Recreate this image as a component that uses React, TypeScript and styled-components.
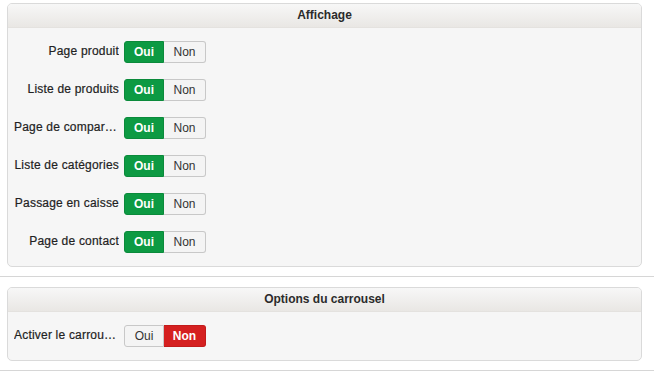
import React from 'react';
import styled, {createGlobalStyle} from "styled-components";

const GlobalStyle = createGlobalStyle`
    body {
        margin: 0;
        background: #ffffff;
        font-family: "Liberation Sans", Arial, sans-serif;
    }
`

type Row = { label: string, on: boolean }

const display: Row[] = [
    {label: 'Page produit', on: true},
    {label: 'Liste de produits', on: true},
    {label: 'Page de comparaison', on: true},
    {label: 'Liste de catégories', on: true},
    {label: 'Passage en caisse', on: true},
    {label: 'Page de contact', on: true},
]

const carousel: Row[] = [
    {label: 'Activer le carrousel', on: false},
]

const Section = ({title, rows}: { title: string, rows: Row[] }) => {
    return (
        <SectionWrap>
            <Panel>
                <PanelHeader>{title}</PanelHeader>
                <PanelBody>
                    {rows.map(r => (
                        <FieldRow key={r.label}>
                            <Label title={r.label}>{r.label}</Label>
                            <Toggle>
                                <ToggleBtn active={r.on} tone="yes">Oui</ToggleBtn>
                                <ToggleBtn active={!r.on} tone="no">Non</ToggleBtn>
                            </Toggle>
                        </FieldRow>
                    ))}
                </PanelBody>
            </Panel>
            <Divider/>
        </SectionWrap>
    )
}

export default function App() {
    return (
        <Page>
            <GlobalStyle/>
            <Section title="Affichage" rows={display}/>
            <Section title="Options du carrousel" rows={carousel}/>
        </Page>
    );
}

const Page = styled.div`
    padding-top: 3px;
    width: 654px;
`

const SectionWrap = styled.div`
    display: flex;
    flex-direction: column;
`

const Panel = styled.div`
    margin: 0 12px 0 7px;
    background: #f6f6f6;
    border: 1px solid #dadada;
    border-radius: 5px;
    overflow: hidden;
`

const PanelHeader = styled.div`
    height: 23px;
    line-height: 23px;
    text-align: center;
    font-size: 12px;
    font-weight: bold;
    color: #2b2b2b;
    background: linear-gradient(#f7f7f7, #e9e7e4);
    border-bottom: 1px solid #e4e2df;
`

const PanelBody = styled.div`
    display: flex;
    flex-direction: column;
    gap: 16px;
    padding: 13px 0 13px 6px;
`

const FieldRow = styled.div`
    display: flex;
    align-items: center;
    gap: 5px;
`

const Label = styled.div`
    width: 105px;
    text-align: right;
    font-size: 12px;
    letter-spacing: 0.2px;
    color: #222;
    -webkit-text-stroke: 0.2px #222;
    white-space: nowrap;
    overflow: hidden;
    text-overflow: ellipsis;
    margin-top: -2px;
`

const Toggle = styled.div`
    display: flex;
`

const ToggleBtn = styled.div<{ active: boolean, tone: 'yes' | 'no' }>`
    width: ${p => p.tone === 'yes' ? 40 : 42}px;
    height: 22px;
    box-sizing: border-box;
    display: flex;
    align-items: center;
    justify-content: center;
    font-size: 12px;
    font-weight: ${p => p.active ? 'bold' : 'normal'};
    color: ${p => p.active ? '#fff' : '#333'};
    background: ${p => p.active ? (p.tone === 'yes' ? '#0d9a43' : '#d52020') : '#f4f4f4'};
    border: 1px solid ${p => p.active ? (p.tone === 'yes' ? '#0b8a3b' : '#c21b1b') : '#c8c8c8'};
    border-radius: ${p => p.tone === 'yes' ? '3px 0 0 3px' : '0 3px 3px 0'};
    ${p => p.tone === 'no' ? 'border-left: none;' : ''}
`

const Divider = styled.div`
    height: 1px;
    background: #d6d6d6;
    margin: 9px 0 10px 0;
`
